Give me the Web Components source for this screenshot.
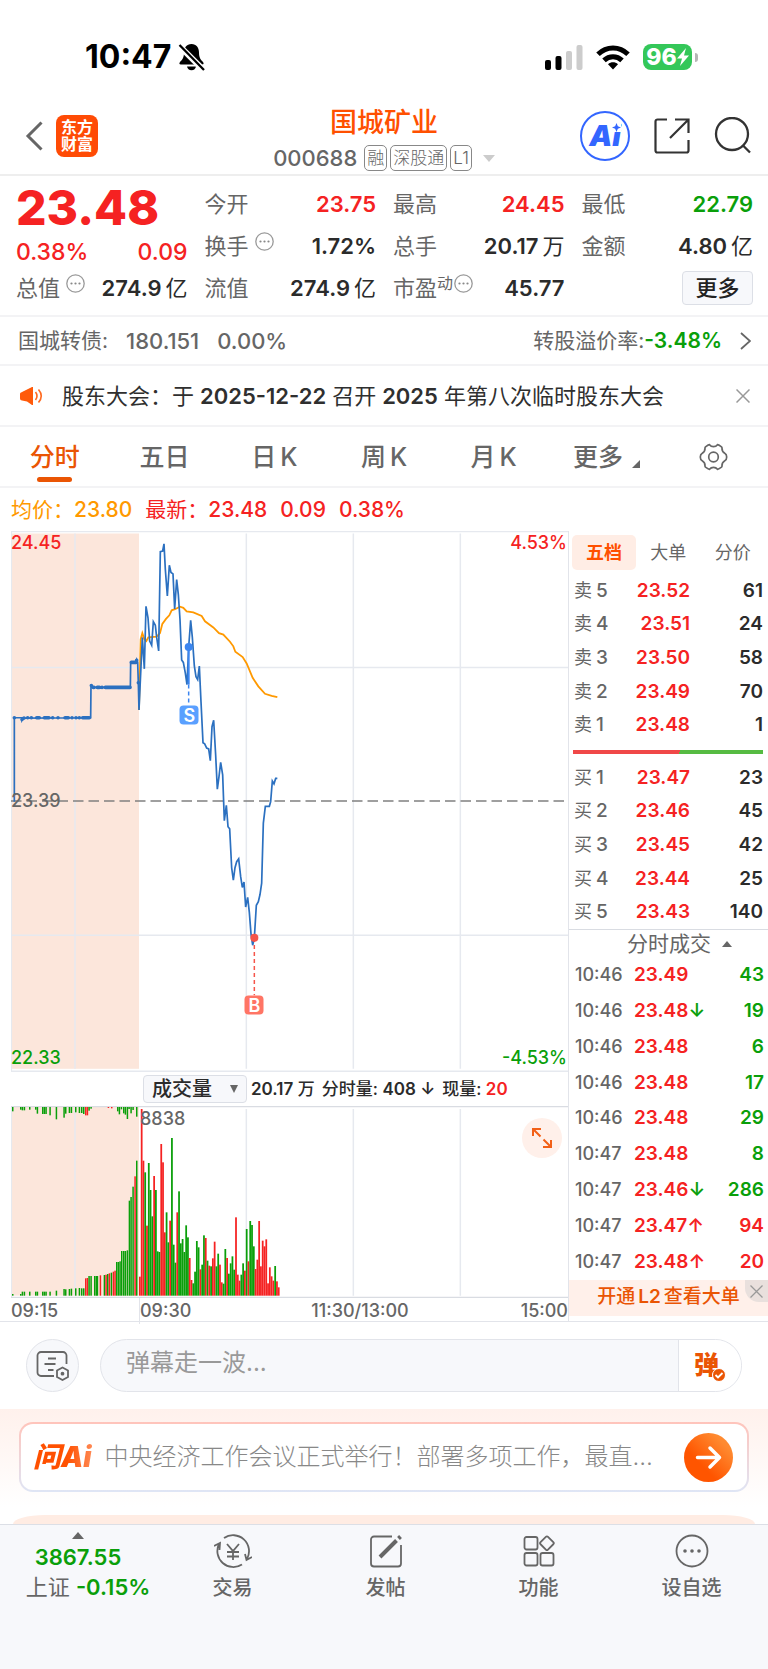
<!DOCTYPE html>
<html lang="zh-CN">
<head>
<meta charset="utf-8">
<meta name="viewport" content="width=device-width, initial-scale=1">
<title>国城矿业 000688</title>
<style>
  html, body { margin: 0; background: #fff; }
  body {
    font-family: Inter, "Noto Sans CJK SC", sans-serif;
    font-size: 22px; line-height: 30px; color: #666;
    --red: #f52222; --green: #0a9f0a; --brand: #ff5000; --deep: #ea5504;
    --ink: #2b2b2b; --grey: #666; --line: #e2e4ea; --faint: #f3f3f5; --panel: #f7f8fb;
  }
</style>
</head>
<body>
<stock-page></stock-page>
<script>
const BASE = `
  * { box-sizing: border-box; }
  :host { display: block; }
  button, input, select { font: inherit; color: inherit; margin: 0; padding: 0; border: 0; background: none; }
  a { color: inherit; text-decoration: none; }
  svg { display: block; flex: none; }
  .red { color: var(--red); } .green { color: var(--green); } .ink { color: var(--ink); }
`;
function define(name, css, html) {
  customElements.define(name, class extends HTMLElement {
    constructor() {
      super();
      this.attachShadow({ mode: 'open' }).innerHTML =
        `<style>${BASE}${css}</style>${html}`;
    }
  });
}

/* phone status bar */
define('status-bar', `
  :host { display: flex; align-items: center; justify-content: space-between; height: 98px; padding: 16px 70px 0 85px; color: #000; }
  .side { display: flex; align-items: center; }
  time { font-size: 32px; line-height: 36px; font-weight: 700; margin-right: 7px; }
  .right { gap: 13px; }
  .bat { display: flex; align-items: center; gap: 3px; }
  .cell { display: flex; align-items: center; justify-content: center; width: 49px; height: 26px; border-radius: 8px; background: #34c759; color: #fff; font-size: 23px; font-weight: 800; line-height: 26px; }
  .nub { width: 3px; height: 9px; border-radius: 0 4px 4px 0; background: #b5b5b5; }
`, `
  <div class="side"><time>10:47</time>
    <svg width="27" height="28" viewBox="0 0 27 28"><path d="M13.500 1C8.500 1 6 5 6 9.500c0 5-1.500 7-4 9.500-1 1.200-.8 2.500.8 2.500h21.400c1.600 0 1.800-1.300.8-2.500-2.500-2.500-4-4.500-4-9.500C21 5 18.500 1 13.500 1zM9 23.500h9c-.5 2.300-2 3.800-4.500 3.800S9.500 25.800 9 23.500z"/><path d="M1 2.500 25.500 27" stroke="#fff" stroke-width="6"/><path d="M1.500 2 26 27" stroke="#000" stroke-width="2.300"/></svg>
  </div>
  <div class="side right">
    <svg width="38" height="25" viewBox="0 0 38 25"><rect y="15" width="6" height="10" rx="2"/><rect x="10.500" y="11" width="6" height="14" rx="2"/><g fill="#ccc"><rect x="21" y="6" width="6" height="19" rx="2"/><rect x="31.500" width="6" height="25" rx="2"/></g></svg>
    <svg width="34" height="25" viewBox="0 0 34 25" fill="none" stroke="#000" stroke-width="5"><path d="M2 9.200C10.500.8 23.500.8 32 9.200"/><path d="M8 15.400c5.200-5 12.800-5 18 0"/><path d="M17 24.500l-5-5.200c3-2.600 7-2.600 10 0z" fill="#000" stroke="none"/></svg>
    <div class="bat"><div class="cell">96<svg width="12" height="18" viewBox="0 0 12 18"><path d="M9 0 0 10.500h5L3 18l9-10.500H7z" fill="#fff"/></svg></div><div class="nub"></div></div>
  </div>
`);

/* stock title bar */
define('title-bar', `
  :host { display: grid; grid-template-columns: 1fr auto 1fr; align-items: center; height: 78px; padding: 0 17px; border-bottom: 2px solid #eee; }
  .left { display: flex; align-items: center; gap: 13px; padding-left: 8px; }
  .logo { width: 42px; height: 42px; border-radius: 8px; background: #ff4b05; color: #fff; font-size: 16px; line-height: 17px; font-weight: 700; text-align: center; padding-top: 4px; }
  .mid { padding-top: 4px; }
  h1 { margin: 0; color: var(--brand); font-size: 27px; line-height: 40px; font-weight: 500; text-align: center; }
  .code { display: flex; align-items: center; gap: 3px; height: 30px; line-height: 26px; }
  .code b { font-weight: 500; margin-right: 4px; }
  .tag { height: 26px; line-height: 24px; border: 1px solid #888; border-radius: 5px; padding: 0 2px; font-size: 17px; font-weight: 300; }
  .down { margin-left: 8px; border: 6px solid transparent; border-top: 7px solid #ccc; border-bottom: 0; }
  .right { display: flex; justify-content: flex-end; align-items: center; gap: 24px; }
  .ai { position: relative; width: 50px; height: 50px; border: 2px solid #3366ff; border-radius: 50%; color: #3366ff; font-size: 29px; line-height: 46px; font-weight: 900; font-style: italic; text-align: center; }
  .ai svg { position: absolute; right: 7px; top: 10px; background: #fff; }
`, `
  <div class="left">
    <button aria-label="返回"><svg width="18" height="30" viewBox="0 0 18 30"><path d="M16.500 1.500 3 15l13.500 13.500" fill="none" stroke="#666" stroke-width="3"/></svg></button>
    <a href="#" class="logo">东方<br>财富</a>
  </div>
  <div class="mid">
    <h1>国城矿业</h1>
    <div class="code"><b>000688</b><span class="tag">融</span><span class="tag">深股通</span><span class="tag">L1</span><i class="down"></i></div>
  </div>
  <div class="right">
    <button class="ai">Ai<svg width="9" height="9" viewBox="0 0 8 8"><path d="M4 0 5.200 2.800 8 4 5.200 5.200 4 8 2.800 5.200 0 4l2.800-1.200z" fill="#36f"/></svg></button>
    <button aria-label="分享"><svg width="36" height="36" viewBox="0 0 36 36" fill="none" stroke="#333" stroke-width="2.200"><path d="M13 1.500H3.500a2 2 0 0 0-2 2v29a2 2 0 0 0 2 2h29a2 2 0 0 0 2-2V22M16 20 34 2M21 1.500h13.500V15"/></svg></button>
    <button aria-label="搜索"><svg width="37" height="38" viewBox="0 0 37 38" fill="none" stroke="#333" stroke-width="2.300"><circle cx="18" cy="17" r="16"/><path d="m28.500 28 7.500 7.500"/></svg></button>
  </div>
`);

/* circled dots hint */
define('info-dot', `
  :host { display: inline-block; align-self: flex-start; margin: 2px 0 0 6px; }
`, `<svg width="19" height="19" viewBox="0 0 19 19"><circle cx="9.500" cy="9.500" r="8.700" fill="none" stroke="#999" stroke-width="1.300"/><g fill="#888"><circle cx="5.500" cy="9.500" r="1.100"/><circle cx="9.500" cy="9.500" r="1.100"/><circle cx="13.500" cy="9.500" r="1.100"/></g></svg>`);

/* one label/value pair: label in the default slot, value in "v" */
define('quote-item', `
  :host { display: flex; align-items: center; height: 42px; line-height: 32px; }
  .l { display: flex; flex: 1; white-space: nowrap; }
  .v { font-weight: 600; white-space: nowrap; }
`, `<span class="l"><slot></slot></span><span class="v"><slot name="v"></slot></span>`);

define('quote-panel', `
  :host { display: grid; grid-template-columns: repeat(4, 1fr); column-gap: 17px; padding: 7px 15px 6px 16px; border-bottom: 2px solid var(--faint); }
  .price { font-size: 48px; line-height: 50px; height: 50px; font-weight: 800; }
  .chg { display: flex; justify-content: space-between; height: 38px; line-height: 38px; font-size: 23px; font-weight: 500; }
  quote-item.low { height: 34px; }
  sup { font-size: 16px; line-height: 22px; align-self: flex-start; vertical-align: top; }
  .u { font-weight: 400; margin-left: 4px; }
  .more { display: flex; height: 42px; align-items: center; justify-content: flex-end; }
  .more button { width: 71px; height: 34px; border: 1px solid #dcdfe6; border-radius: 4px; background: var(--panel); color: #222; font-weight: 500; line-height: 30px; }
  info-dot.tight { margin-left: 1px; }
`, `
  <div>
    <div class="price red">23.48</div>
    <div class="chg red"><span>0.38%</span><span>0.09</span></div>
    <quote-item class="low">总值<info-dot></info-dot><span slot="v" class="ink">274.9<span class="u">亿</span></span></quote-item>
  </div>
  <div>
    <quote-item>今开<span slot="v" class="red">23.75</span></quote-item>
    <quote-item>换手<info-dot></info-dot><span slot="v" class="ink">1.72%</span></quote-item>
    <quote-item>流值<span slot="v" class="ink">274.9<span class="u">亿</span></span></quote-item>
  </div>
  <div>
    <quote-item>最高<span slot="v" class="red">24.45</span></quote-item>
    <quote-item>总手<span slot="v" class="ink">20.17<span class="u">万</span></span></quote-item>
    <quote-item>市盈<sup>动</sup><info-dot class="tight"></info-dot><span slot="v" class="ink">45.77</span></quote-item>
  </div>
  <div>
    <quote-item>最低<span slot="v" class="green">22.79</span></quote-item>
    <quote-item>金额<span slot="v" class="ink">4.80<span class="u">亿</span></span></quote-item>
    <div class="more"><button>更多</button></div>
  </div>
`);

define('bond-row', `
  a { display: flex; align-items: center; height: 49px; padding: 0 17px 0 18px; font-size: 21px; border-bottom: 2px solid var(--faint); }
  b { font-weight: 500; font-size: 22px; } .green { font-weight: 600; font-size: 21px; }
  .a { margin: 0 18px; } .sp { flex: 1; }
  svg { margin-left: 18px; }
`, `
  <a href="#"><span>国城转债:</span><b class="a">180.151</b><b>0.00%</b><span class="sp"></span>
  <span>转股溢价率:</span><b class="green">-3.48%</b>
  <svg width="11" height="18" viewBox="0 0 11 18"><path d="m1 1 9 8-9 8" fill="none" stroke="#666" stroke-width="1.800"/></svg></a>
`);

define('notice-row', `
  :host { display: flex; align-items: center; height: 61px; padding: 0 18px 0 20px; border-bottom: 2px solid var(--faint); }
  p { flex: 1; margin: 0 0 0 19px; color: #2f2f2f; white-space: nowrap; }
  b { font-weight: 600; margin: 0 6px; }
`, `
  <svg width="23" height="18" viewBox="0 0 23 18"><path d="M1 5.500 12 0h1v18h-1L7 14.500l-5-1q-2 0-2-2V7q0-1.500 1-1.500z" fill="#ff5a0a"/><path d="M15.500 5q3 4 0 8M18.500 2.500q5.500 6.500 0 13" fill="none" stroke="#ff6a20" stroke-width="1.600"/></svg>
  <p>股东大会：于<b>2025-12-22</b>召开<b>2025</b>年第八次临时股东大会</p>
  <button aria-label="关闭"><svg width="14" height="14" viewBox="0 0 14 14"><path d="m.5.500 13 13m0-13-13 13" stroke="#999" stroke-width="1.500"/></svg></button>
`);

define('period-tabs', `
  :host { display: grid; grid-template-columns: repeat(7, 1fr); height: 61px; border-bottom: 2px solid var(--faint); }
  button { position: relative; display: flex; align-items: center; justify-content: center; font-size: 25px; font-weight: 500; }
  button.on { color: var(--deep); }
  button.on::after { content: ""; position: absolute; bottom: 4px; width: 35px; height: 5px; border-radius: 3px; background: currentColor; }
  .more { padding-left: 6px; }
  i { align-self: flex-end; margin: 0 0 18px 9px; border: 4px solid; border-color: transparent #666 #666 transparent; }
  span { margin-left: 4px; }
`, `
  <button class="on">分时</button><button>五日</button><button>日<span>K</span></button><button>周<span>K</span></button><button>月<span>K</span></button><button class="more">更多<i></i></button>
  <button aria-label="设置"><svg width="29" height="28" viewBox="0 0 29 28" fill="none" stroke="#666" stroke-width="1.700"><circle cx="14.500" cy="14" r="4.800"/><path d="M10.500 1.700q1.500 2 4 2t4-2q1 0 4 2.200.6.600.5 1.300-.2 3.200 2.800 5 1.900 1 1.900 3.800t-1.900 3.800q-3 1.800-2.800 5 .1.700-.5 1.300-3 2.200-4 2.200-1.500-2-4-2t-4 2q-1 0-4-2.200-.6-.6-.5-1.300.2-3.200-2.800-5Q1.300 16.800 1.300 14t1.900-3.800q3-1.800 2.800-5-.1-.7.500-1.300 3-2.200 4-2.200z"/></svg></button>
`);

define('legend-row', `
  :host { display: flex; align-items: center; gap: 13px; height: 43px; padding-left: 11px; font-size: 21px; font-weight: 500; }
  .avg { color: #ff9900; } span { white-space: nowrap; } i { font-style: normal; font-weight: 400; }
`, `<span class="avg"><i>均价：</i>23.80</span><span class="red"><i>最新：</i>23.48</span><span class="red">0.09</span><span class="red">0.38%</span>`);

/* intraday price chart */
define('price-chart', `
  :host { position: relative; height: 541px; font-size: 18px; font-weight: 500; line-height: 20px; }
  svg { width: 100%; height: 100%; }
  svg * { vector-effect: non-scaling-stroke; }
  span { position: absolute; }
  .tl { left: 0; top: 2px; } .tr { right: 1px; top: 2px; } .bl { left: 0; bottom: 4px; } .br { right: 1px; bottom: 4px; } .mid { left: 0; top: 260px; color: var(--grey); }
  .mark { width: 19px; height: 19px; border-radius: 4px; color: #fff; text-align: center; line-height: 19px; font-weight: 600; transform: translate(-50%, -50%); }
  .s { left: 32%; top: 34%; background: #5aa0ff; } .b { left: 43.700%; top: 87.600%; background: #ff7565; }
`, `
  <svg viewBox="33 32 1671 1515" preserveAspectRatio="none" fill="none">
    <rect x="33" y="39" width="384" height="1499" fill="#fce6db"/>
    <path d="M33 33.500H1704M33 1545H1704M34 33V1545M33 414H1704M33 1164H1704M225 39V1538M739 39V1538M1060 39V1538M1381 39V1538" stroke="#e6e9ef" stroke-width="1.500"/>
    <path d="M33 788H1704" stroke="#808080" stroke-width="1.500" stroke-dasharray="10.500 5"/>
    <polyline stroke="#ff9900" stroke-width="1.800" points="417,533 422,335 427,318 433,335 439,340 445,330 470,328 480,318 487,292 498,278 508,268 515,254 525,251 540,244 550,247 560,257 580,260 605,270 615,285 640,302 657,318 670,322 690,342 700,355 706,370 728,385 740,403 758,443 775,467 795,488 815,494 832,497"/>
    <polyline stroke="#2b70c0" stroke-width="1.700" points="43,790 43,555 66,555 66,562 70,556 272,555 273,463 277,470 391,470 392,400 407,400 410,392 413,400 415,458 417,533 427,330 433,418 438,243 444,275 449,340 455,352 460,286 466,296 470,330 476,368 481,90 488,88 492,68 496,140 502,214 508,128 513,148 519,152 524,250 530,168 535,210 540,280 545,393 550,400 556,430 561,462 566,357 572,282 577,330 583,410 588,440 593,448 598,410 603,510 609,625 614,628 620,640 626,642 631,675 636,580 641,562 647,660 652,755 657,720 662,680 668,715 673,843 679,800 684,860 689,866 695,975 700,1010 705,975 710,958 716,950 722,1000 727,1030 732,1015 737,1085 743,1058 748,1100 753,1160 758,1192 763,1172 769,1080 775,1070 780,1050 785,1018 790,850 796,803 808,803 812,790 817,732 822,740 827,725 832,725"/>
    <path d="M43 555h.1M66 560h.1M72 556h.1M83 555h.1M94 555h.1M110 555h8M133 555h14M158 555h.1M174 555h.1M195 555h10M216 555h.1M228 555h.1M238 555h.1M248 555h20M274 465h.1M280 470h2M292 470h6M306 470h.1M316 470h74M394 400h14M410 394h.1M415 457h.1" stroke="#2b70c0" stroke-width="3.600" stroke-linecap="round"/>
    <path d="M566 357V462" stroke="#3b85f0" stroke-width="2"/>
    <path d="M566 462V520" stroke="#3b85f0" stroke-width="1.500" stroke-dasharray="4 3"/>
    <path d="M763 1172V1332" stroke="#f5554a" stroke-width="1.500" stroke-dasharray="4 3"/>
    <path d="M566 357h.1" stroke="#3b85f0" stroke-width="8" stroke-linecap="round"/>
    <path d="M763 1171h.1" stroke="#f5554a" stroke-width="8" stroke-linecap="round"/>
  </svg>
  <span class="tl red">24.45</span><span class="tr red">4.53%</span><span class="mid">23.39</span><span class="bl green">22.33</span><span class="br green">-4.53%</span>
  <span class="mark s">S</span><span class="mark b">B</span>
`);

/* volume indicator header */
define('volume-head', `
  :host { display: flex; align-items: center; height: 34px; padding-left: 132px; font-size: 17px; font-weight: 500; color: var(--ink); white-space: nowrap; }
  .sel { position: relative; width: 104px; height: 28px; margin-right: 4px; }
  select { display: block; appearance: none; width: 100%; height: 28px; padding: 0 0 0 8px; border: 1px solid #dcdfe6; border-radius: 4px; background: var(--panel); font-size: 20px; line-height: 26px; }
  .sel::after { content: ""; position: absolute; right: 9px; top: 10px; border: 4px solid transparent; border-top: 8px solid #666; border-bottom: 0; pointer-events: none; }
  span + span { margin-left: 7px; }
  b { font-weight: 600; }
`, `
  <label class="sel"><select aria-label="指标"><option>成交量</option></select></label>
  <span><b>20.17</b> 万</span><span>分时量: <b>408 ↓</b></span><span>现量: <b class="red">20</b></span>
`);

/* volume bars: value = top edge of the bar, then its colour */
const SESSION = '648r 145r 300r 335g 495r 307g 388g 467g 346r 388g 572g 574g 250r 305r 515r 455g 545g 480r 232g 552g 606g 455r 392g 548g 535g 574g 494g 530g 592r 658r 668g 633g 541g 560g 626r 612g 524g 532r 600g 615r 617g 593r 543r 617g 579g 612r 665r 669g 565g 592r 639g 608g 587g 627g 470r 642r 660r 642g 608g 630r 505g 602r 481g 493g 557g 625r 597r 481r 617r 540r 557r 536r 668r 620r 647r 660r 616g 662r 680r'.split(' ');
const PRE = '38:700g 62:700g 67:693g 73:693g 89:693g 107:693g 112:693g 128:693g 133:693g 138:693g 150:693g 169:690g 192:685g 197:686g 208:685g 214:684g 227:683g 238:682g 245:683g 251:683g 257:653r 262:652r 267:646g 273:646g 284:646g 289:646g 292:646g 301:644r 313:643g 318:642r 323:640g 328:638r 334:636g 340:633r 345:630r 350:604g 355:604g 360:602g 365:571g 371:571g 376:571g 382:569g 388:420g 393:409g 399:378g 405:347r 410:300g'.split(' ');
const TOPS = '38:152g 62:147g 67:149g 73:149g 89:147g 107:147g 112:159g 128:160g 133:160g 138:160g 150:164g 169:176g 192:171g 197:159g 208:157g 214:157g 227:155g 238:157g 245:157g 251:160g 257:164r 262:164r 267:150g 273:144g 325:142r 335:143r 353:152g 358:161g 364:146g 371:158g 376:162g 382:175g 387:145g 393:158g 399:148g 410:168g'.split(' ');
const hue = c => c === 'r' ? '#f52222' : '#0a9f0a';
function bars() {
  let out = '';
  SESSION.forEach((s, i) => { const y = parseInt(s); out += `<rect x="${417 + i * 5.34}" y="${y}" width="5.3" height="${705 - y}" fill="${hue(s.at(-1))}"/>`; });
  PRE.forEach(s => { const [x, v] = s.split(':'), y = parseInt(v); out += `<rect x="${x - 2}" y="${y}" width="4.5" height="${705 - y}" fill="${hue(v.at(-1))}"/>`; });
  TOPS.forEach(s => { const [x, v] = s.split(':'); out += `<rect x="${x - 2}" y="139" width="4.5" height="${parseInt(v) - 139}" fill="${hue(v.at(-1))}"/>`; });
  return out;
}
define('volume-chart', `
  .plot { position: relative; height: 192px; }
  svg.c { width: 100%; height: 100%; }
  svg.c path { vector-effect: non-scaling-stroke; }
  .max { position: absolute; left: 129px; top: 3px; font-size: 18px; line-height: 20px; font-weight: 500; }
  button { position: absolute; right: 6px; top: 12px; width: 40px; height: 40px; border-radius: 50%; background: #fff0ea; display: grid; place-items: center; }
  .axis { display: grid; grid-template-columns: 128px 1fr; height: 24px; font-size: 18px; line-height: 26px; font-weight: 500; border-bottom: 1px solid var(--line); margin-left: -11px; padding-left: 11px; }
  .axis span { white-space: nowrap; }
  .rest { display: flex; justify-content: space-between; border-left: 1px solid var(--line); }
  .rest .m { margin-left: 8px; }
`, `
  <div class="plot">
    <svg class="c" viewBox="33 136 1671 576" preserveAspectRatio="none" fill="none">
      <rect x="33" y="139" width="384" height="566" fill="#fce6db"/>
      <path d="M34 138V709M225 145V705M739 145V705M1060 145V705M1381 145V705" stroke="#e6e9ef" stroke-width="1.500"/>
      <path d="M33 137.500H1704M33 710.500H1704" stroke="#d9dce2" stroke-width="1.600"/>
      ${bars()}
    </svg>
    <span class="max">8838</span>
    <button aria-label="全屏"><svg width="20" height="20" viewBox="0 0 20 20" fill="none" stroke="#f26017" stroke-width="2"><path d="M1 8V1h8M1 1l7.500 7.500M19 12v7h-8M19 19l-7.500-7.500"/></svg></button>
  </div>
  <div class="axis"><span>09:15</span><div class="rest"><span>09:30</span><span class="m">11:30/13:00</span><span>15:00</span></div></div>
`);

/* five-level quotes and tick list */
const row = (side, n, p, q) => `<tr><th scope="row">${side}<i>${n}</i></th><td class="red">${p}</td><td class="q ink">${q}</td></tr>`;
const tick = (t, p, a, q, c) => `<tr><th scope="row">${t}</th><td class="red">${p}${a ? `<span class="${a === '↓' ? 'green' : 'red'}">${a}</span>` : ''}</td><td class="q ${c}">${q}</td></tr>`;
define('order-book', `
  :host { display: flex; flex-direction: column; border-left: 1px solid var(--line); border-bottom: 1px solid var(--line); font-size: 19px; }
  nav { display: grid; grid-template-columns: 64px 1fr 1fr; padding: 4px 3px 0; height: 43px; }
  nav button { height: 35px; font-size: 18px; border-radius: 5px; line-height: 33px; }
  nav .on { background: #ffede5; color: var(--brand); font-weight: 700; }
  table { width: 100%; border-collapse: collapse; table-layout: fixed; line-height: 24px; }
  .lv { height: 168px; } .tk { height: 323px; }
  th { width: 61px; padding: 0 0 0 5px; text-align: left; font-weight: 400; font-size: 18px; }
  .tk th { width: 65px; padding-left: 6px; font-weight: 500; }
  i { font-style: normal; font-weight: 500; font-size: 19px; margin-left: 4px; }
  td { padding: 0; font-weight: 600; } .lv td:nth-child(2) { text-align: right; width: 60px; }
  .q { text-align: right; padding-right: 5px; } .tk .q { width: 50px; padding-right: 4px; }
  .tk td span { display: inline-block; width: 13px; }
  .tk td { white-space: nowrap; }
  .depth { height: 4px; margin: 8px 5px 7px 4px; background: linear-gradient(115deg, #f04848 56%, #56bb42 56%); }
  h2 { margin: 0; border-top: 1px solid #d9dce2; height: 28px; line-height: 28px; font-size: 21px; font-weight: 400; display: flex; align-items: center; justify-content: center; gap: 11px; padding-left: 22px; }
  h2::after { content: ""; border: 5px solid transparent; border-bottom: 6px solid #666; border-top: 0; }
  .promo { position: relative; flex: none; height: 36px; background: #fff0ea; color: var(--deep); font-size: 19px; line-height: 34px; font-weight: 500; text-align: center; }
  .promo a { display: block; }
  .promo b { font-weight: 600; margin: 0 3px; }
  .promo button { position: absolute; right: 0; top: 0; width: 23px; height: 22px; border-bottom-left-radius: 14px; background: #e9e0dd; display: grid; place-items: center; }
`, `
  <nav><button class="on">五档</button><button>大单</button><button>分价</button></nav>
  <table class="lv">${[[5,'23.52',61],[4,'23.51',24],[3,'23.50',58],[2,'23.49',70],[1,'23.48',1]].map(r => row('卖', ...r)).join('')}</table>
  <div class="depth"></div>
  <table class="lv">${[[1,'23.47',23],[2,'23.46',45],[3,'23.45',42],[4,'23.44',25],[5,'23.43',140]].map(r => row('买', ...r)).join('')}</table>
  <h2>分时成交</h2>
  <table class="tk">${[['10:46','23.49','',43,'green'],['10:46','23.48','↓',19,'green'],['10:46','23.48','',6,'green'],['10:46','23.48','',17,'green'],['10:46','23.48','',29,'green'],['10:47','23.48','',8,'green'],['10:47','23.46','↓',286,'green'],['10:47','23.47','↑',94,'red'],['10:47','23.48','↑',20,'red']].map(r => tick(...r)).join('')}</table>
  <div class="promo"><a href="#">开通<b>L2</b>查看大单</a><button aria-label="关闭"><svg width="13" height="13" viewBox="0 0 13 13"><path d="m.5.500 12 12m0-12-12 12" stroke="#999" stroke-width="1.300"/></svg></button></div>
`);

define('market-board', `
  :host { display: grid; grid-template-columns: minmax(0, 1fr) 200px; }
  .chart { padding-left: 11px; }
`, `<div class="chart"><price-chart></price-chart><volume-head></volume-head><volume-chart></volume-chart></div><order-book></order-book>`);

/* bullet comment entry */
define('danmu-bar', `
  :host { display: flex; gap: 21px; padding: 17px 26px; }
  .set { flex: none; width: 53px; height: 53px; border: 1px solid var(--line); border-radius: 50%; background: var(--panel); display: grid; place-items: center; }
  .pill { display: flex; flex: 1; height: 53px; border: 1px solid var(--line); border-radius: 27px; overflow: hidden; background: var(--panel); }
  input { flex: 1; min-width: 0; padding: 0 25px 5px; font-size: 24px; outline: 0; }
  input::placeholder { color: #999; opacity: 1; }
  .send { position: relative; width: 63px; border-left: 1px solid var(--line); background: #fff; color: var(--deep); font-size: 25px; font-weight: 900; line-height: 46px; text-align: left; padding: 0 0 2px 15px; }
  .send svg { position: absolute; left: 33px; top: 28px; }
`, `
  <button class="set" aria-label="弹幕设置"><svg width="34" height="30" viewBox="0 0 34 30" fill="none" stroke="#666" stroke-width="1.800"><path d="M18 25H5a3.500 3.500 0 0 1-3.500-3.500v-17A3.500 3.500 0 0 1 5 1h22a3.500 3.500 0 0 1 3.500 3.500V13M12 7.500h8M8.500 13h11M12 19h5.500"/><path d="m26.500 16.500 5.500 3v6.500l-5.500 3-5.500-3v-6.500z"/><circle cx="26.500" cy="22.700" r="1" fill="#666"/></svg></button>
  <div class="pill"><input type="text" aria-label="弹幕" placeholder="弹幕走一波..."><button class="send">弹<svg width="14" height="14" viewBox="0 0 14 14"><circle cx="7" cy="7" r="6.500" fill="#ea5504" stroke="#fff"/><path d="m3.500 7 2.500 2.500 4.500-4.500" fill="none" stroke="#fff" stroke-width="1.800"/></svg></button></div>
`);

define('ai-banner', `
  :host { padding: 13px 19px 0; background: linear-gradient(#fff1ec, #fff 85%); overflow: hidden; }
  a { display: flex; align-items: center; height: 70px; padding: 0 14px 0 12px; border: 2px solid transparent; border-radius: 14px;
      background: linear-gradient(#fff, #fff) padding-box, linear-gradient(#ffc4bb, #dfe5f5) border-box; }
  .logo { font-size: 28px; font-weight: 900; font-style: italic; color: transparent; background: linear-gradient(90deg, #ff5000 55%, #ff8f5c); background-clip: text; -webkit-background-clip: text; padding-right: 3px; line-height: 40px; white-space: nowrap; }
  .q { flex: 1; min-width: 0; margin: 0 14px 0 10px; font-size: 24px; line-height: 36px; font-weight: 300; color: #888; white-space: nowrap; overflow: hidden; text-overflow: ellipsis; }
  .next { height: 9px; margin: 23px -6px 0; border-radius: 32px 32px 0 0 / 9px 9px 0 0; background: #ffece3; }
`, `
  <a href="#"><span class="logo">问Ai</span><span class="q">中央经济工作会议正式举行！部署多项工作，最直…</span>
  <svg width="49" height="49" viewBox="0 0 49 49"><defs><linearGradient id="g" x1="0" y1="1" x2="1" y2="0"><stop offset=".35" stop-color="#ff5500"/><stop offset=".8" stop-color="#ff8a30"/></linearGradient></defs><circle cx="24.500" cy="24.500" r="24.500" fill="url(#g)"/><path d="M13.500 24.500H35M26 15l9.500 9.500L26 34" fill="none" stroke="#fff" stroke-width="3.500" stroke-linecap="round" stroke-linejoin="round"/></svg></a>
  <div class="next"></div>
`);

/* bottom bar entry: icon in the default slot, caption in "label" */
define('nav-item', `
  a { display: flex; flex-direction: column; align-items: center; gap: 4px; padding-top: 8px; }
  .i { height: 36px; display: grid; place-items: center; }
  .t { font-size: 20px; font-weight: 500; }
`, `<a href="#"><span class="i"><slot></slot></span><span class="t"><slot name="label"></slot></span></a>`);

define('bottom-bar', `
  :host { display: grid; grid-template-columns: 156px repeat(4, 1fr); flex: 1; padding-bottom: 60px; border-top: 1px solid #dcdfe6; background: var(--panel); }
  .idx { display: flex; flex-direction: column; align-items: center; white-space: nowrap; }
  .idx::before { content: ""; margin: 7px 0 3px; border: 6px solid transparent; border-bottom: 7px solid #666; border-top: 0; }
  b { font-weight: 600; }
  .row { padding-left: 20px; }
`, `
  <a href="#" class="idx"><b class="green">3867.55</b><span class="row">上证 <b class="green">-0.15%</b></span></a>
  <nav-item><svg width="38" height="34" viewBox="0 0 38 34" fill="none" stroke="#666" stroke-width="1.800"><path d="M10 4A16 16 0 0 1 33 25M28 30.500A16 16 0 0 1 5 10M0 12l6-3-.5 7M38 23l-5.500 3-1.500-6M13 10l6 7 6-7M19 17v9M13 18h12M13 22.500h12"/></svg><span slot="label">交易</span></nav-item>
  <nav-item><svg width="34" height="34" viewBox="0 0 34 34" fill="none" stroke="#666" stroke-width="1.800"><path d="M23 2.500H5a3 3 0 0 0-3 3v24a3 3 0 0 0 3 3h24a3 3 0 0 0 3-3V11"/><path d="m11 23 16.500-16.500M29.500 4.500l2-2" stroke-width="4"/></svg><span slot="label">发帖</span></nav-item>
  <nav-item><svg width="32" height="32" viewBox="0 0 32 32" fill="none" stroke="#666" stroke-width="1.800"><rect x="1.500" y="2" width="13" height="12.500" rx="2"/><rect x="1.500" y="18" width="13" height="12.500" rx="2"/><rect x="17.500" y="18" width="13" height="12.500" rx="2"/><rect x="18.700" y="3" width="10.500" height="10.500" rx="1.500" transform="rotate(45 24 8.200)"/></svg><span slot="label">功能</span></nav-item>
  <nav-item><svg width="34" height="34" viewBox="0 0 34 34"><circle cx="17" cy="17" r="15.500" fill="none" stroke="#666" stroke-width="1.800"/><g fill="#666"><circle cx="10" cy="17" r="1.800"/><circle cx="17" cy="17" r="1.800"/><circle cx="24" cy="17" r="1.800"/></g></svg><span slot="label">设自选</span></nav-item>
`);

define('stock-page', `
  :host { display: flex; flex-direction: column; min-height: 100vh; }
`, `
  <status-bar></status-bar><title-bar></title-bar><quote-panel></quote-panel><bond-row></bond-row><notice-row></notice-row>
  <period-tabs></period-tabs><legend-row></legend-row><market-board></market-board><danmu-bar></danmu-bar><ai-banner></ai-banner><bottom-bar></bottom-bar>
`);
</script>
</body>
</html>
